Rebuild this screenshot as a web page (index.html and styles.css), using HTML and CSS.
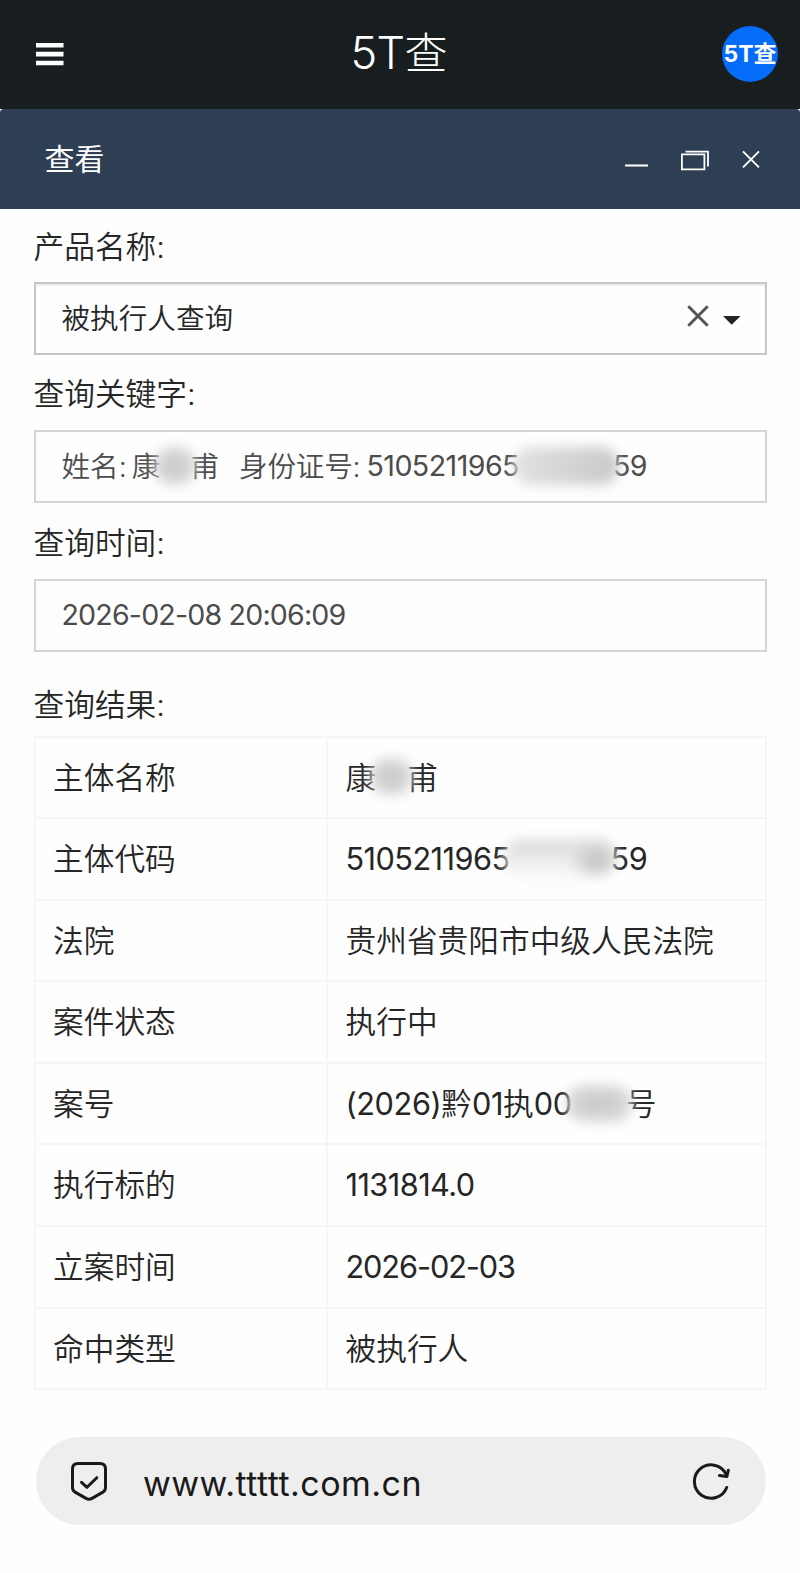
FILE: index.html
```html
<!DOCTYPE html>
<html lang="zh-CN">
<head>
<meta charset="utf-8">
<title>5T查</title>
<link rel="stylesheet" href="styles.css">
</head>
<body>
<header class="topbar">
  <svg class="menu-icon" width="28" height="24" viewBox="0 0 28 24"><path d="M0 0.9h27.5v4.6H0zM0 9.8h27.500v4.600H0zM0 18.700h27.500v4.600H0z" fill="#fff"/></svg>
  <h1 class="brand"><span class="brand-latin">5T</span>查</h1>
  <div class="avatar">5T查</div>
</header>
<main class="dialog">
  <div class="dialog-head">
    <h2 class="dialog-title">查看</h2>
    <div class="window-actions">
      <svg width="24" height="30" viewBox="0 0 24 30"><path d="M0 21.500h23" stroke="#fff" stroke-width="2" fill="none"/></svg>
      <svg width="29" height="30" viewBox="0 0 29 30" fill="none" stroke="#fff" stroke-width="1.8"><path d="M.9 10.300h22.500v15H.9zM4.500 7.600h22.500v15"/></svg>
      <svg width="18" height="30" viewBox="0 0 18 30"><path d="M1 7.300l16 16M17 7.300l-16 16" stroke="#fff" stroke-width="1.9" fill="none"/></svg>
    </div>
  </div>
  <form class="form">
    <label class="label label-first">产品名称:</label>
    <div class="field field-select">
      <span class="cjk">被执行人查询</span>
      <span class="select-tools">
        <svg width="22" height="22" viewBox="0 0 22 22"><path d="M1.300 1.300l19.400 19.400M20.700 1.300L1.300 20.700" stroke="#555" stroke-width="3" fill="none"/></svg>
        <svg class="caret" width="18" height="9" viewBox="0 0 18 9"><path d="M0 0h17.500L8.700 8.800z" fill="#222"/></svg>
      </span>
    </div>
    <label class="label">查询关键字:</label>
    <div class="field field-keyword"><span class="cjk">姓名: 康</span><i class="mask mask-name"></i><span class="cjk">甫</span><span class="cjk id-label">身份证号:</span><span class="num id-start">5105211965</span><i class="mask mask-id"></i><span class="num">59</span></div>
    <label class="label label-time">查询时间:</label>
    <div class="field"><span class="num time">2026-02-08 20:06:09</span></div>
    <label class="label label-result">查询结果:</label>
    <div class="table">
      <div class="row"><div class="key">主体名称</div><div class="value">康<i class="mask mask-owner"></i>甫</div></div>
      <div class="row"><div class="key">主体代码</div><div class="value"><span class="num">5105211965</span><i class="mask mask-code"></i><span class="num">59</span></div></div>
      <div class="row"><div class="key">法院</div><div class="value">贵州省贵阳市中级人民法院</div></div>
      <div class="row"><div class="key">案件状态</div><div class="value">执行中</div></div>
      <div class="row"><div class="key">案号</div><div class="value"><span class="num case">(2026)</span>黔<span class="num case">01</span>执<span class="num case">00</span><i class="mask mask-case"></i>号</div></div>
      <div class="row"><div class="key">执行标的</div><div class="value"><span class="num">1131814.0</span></div></div>
      <div class="row"><div class="key">立案时间</div><div class="value"><span class="num date">2026-02-03</span></div></div>
      <div class="row"><div class="key">命中类型</div><div class="value">被执行人</div></div>
    </div>
  </form>
</main>
<footer class="address">
  <svg width="38" height="42" viewBox="0 0 38 42" fill="none" stroke="#1a1a1a" stroke-width="3" stroke-linecap="round" stroke-linejoin="round"><path d="M8 2.500h22q5.500 0 5.500 5.500v18.500q0 3-2.600 4.600L22 37.400q-3 1.800-6 0L5.100 31.100Q2.500 29.500 2.500 26.500V8Q2.500 2.500 8 2.500z"/><path d="M11.500 21.300l5.500 5 9.800-9.600"/></svg>
  <span class="url">www.ttttt.com.cn</span>
  <svg class="reload" width="38" height="38" viewBox="0 0 38 38" fill="none" stroke="#1a1a1a" stroke-width="3" stroke-linecap="round" stroke-linejoin="round"><path d="M34.700 24.500A16.700 16.700 0 1 1 34 11"/><path d="M36.300 7.300L34.900 13.500 27.500 12.500"/></svg>
</footer>
</body>
</html>
```
FILE: styles.css
```css
* { box-sizing: border-box; }
body {
  margin: 0;
  width: 800px;
  height: 1573px;
  overflow: hidden;
  background: #fefefe;
  color: #262626;
  font-family: Inter, "Noto Sans CJK SC", sans-serif;
  font-size: 30.7px;
  font-weight: 350;
}
h1, h2 { margin: 0; font-weight: 400; }
svg { display: block; flex: none; }
.topbar {
  display: grid;
  grid-template-columns: 56px 1fr 56px;
  align-items: center;
  height: 109px;
  padding: 0 22px 2px 36px;
  background: #181e20;
  color: #fff;
}
.brand {
  padding: 0 16px 2px 0;
  text-align: center;
  font-size: 43px;
  font-weight: 300;
  line-height: 60px;
}
.brand-latin { font-size: 45px; letter-spacing: -0.6px; }
.avatar {
  display: flex;
  align-items: center;
  justify-content: center;
  width: 56px;
  height: 56px;
  padding-bottom: 3px;
  border-radius: 50%;
  background: #046cf6;
  font-size: 23px;
  font-weight: 700;
  white-space: nowrap;
}
.dialog { background: #fefefe; }
.dialog-head {
  display: flex;
  align-items: center;
  justify-content: space-between;
  height: 100px;
  padding: 0 40px 0 44.5px;
  border-radius: 4px 4px 0 0;
  background: #2e3e53;
  color: #fff;
}
.dialog-title { padding-bottom: 5px; font-size: 30px; }
.window-actions { display: flex; gap: 32px; }
.form { display: flex; flex-direction: column; padding: 0 33px 0 33.5px; }
.label { height: 75px; padding-top: 2px; line-height: 73px; }
.label-first { height: 73px; padding-top: 1px; }
.label-time { height: 76px; padding-top: 3px; }
.label-result { height: 83.5px; padding-top: 16px; }
.field {
  display: flex;
  align-items: center;
  height: 73px;
  padding: 0 24px 2px 26px;
  border: 2px solid #d4d4d4;
  color: #4c4c4c;
  font-size: 28.6px;
  white-space: pre;
}
.field-select { justify-content: space-between; border-color: #c6c6c6; color: #262626; box-shadow: inset 0 2px 1px #eee; }
.field-keyword { word-spacing: -3px; }
.cjk { padding-bottom: 3px; }
.select-tools { display: flex; align-items: center; gap: 14px; padding-bottom: 3px; }
.caret { margin-top: 8px; }
.id-label { margin-left: 20px; letter-spacing: -0.2px; }
.id-start { margin-left: 6px; }
.num { font-weight: 400; letter-spacing: -0.55px; }
.time { letter-spacing: -0.83px; }
.date { letter-spacing: -1.1px; }
.case { letter-spacing: -0.4px; }
.table { border-top: 2px solid #f6f6f6; border-left: 2px solid #f6f6f6; }
.row { display: grid; grid-template-columns: 292px 1fr; height: 81.6px; line-height: 79px; }
.key, .value { padding-left: 17.5px; border-right: 2px solid #f6f6f6; border-bottom: 2px solid #f6f6f6; white-space: nowrap; }
.value { padding-left: 18px; }
.mask { position: relative; display: inline-block; height: 30px; vertical-align: middle; }
.mask::before {
  content: "";
  position: absolute;
  inset: -4px -6px -4px;
  border-radius: 18px;
  background: radial-gradient(closest-side, #c8c8c8, #dadada);
  filter: blur(6px);
}
.mask-name { width: 30px; }
.mask-id { width: 94px; }
.mask-id::before { background: linear-gradient(90deg, #e2e2e2, #cccccc 85%); }
.mask-owner { width: 31px; }
.mask-owner::before { top: -7px; bottom: 0; }
.mask-code { width: 101px; }
.mask-code::before {
  top: -8px;
  bottom: 0;
  background:
    radial-gradient(ellipse 28px 20px at 82% 60%, #bcbcbc, transparent),
    linear-gradient(180deg, #dedede 20%, #f4f4f4 75%);
}
.mask-case { width: 54px; }
.mask-case::before { top: -7px; bottom: 0; }
.address {
  display: flex;
  align-items: center;
  width: 730px;
  height: 88px;
  margin: 47px 0 0 36px;
  padding: 1px 36px 0 34px;
  border-radius: 44px;
  background: #eee;
  color: #1a1a1a;
  font-weight: 400;
}
.url { padding-top: 3px; margin-left: 35px; font-size: 34px; letter-spacing: 0.45px; }
.reload { margin-left: auto; }
```
